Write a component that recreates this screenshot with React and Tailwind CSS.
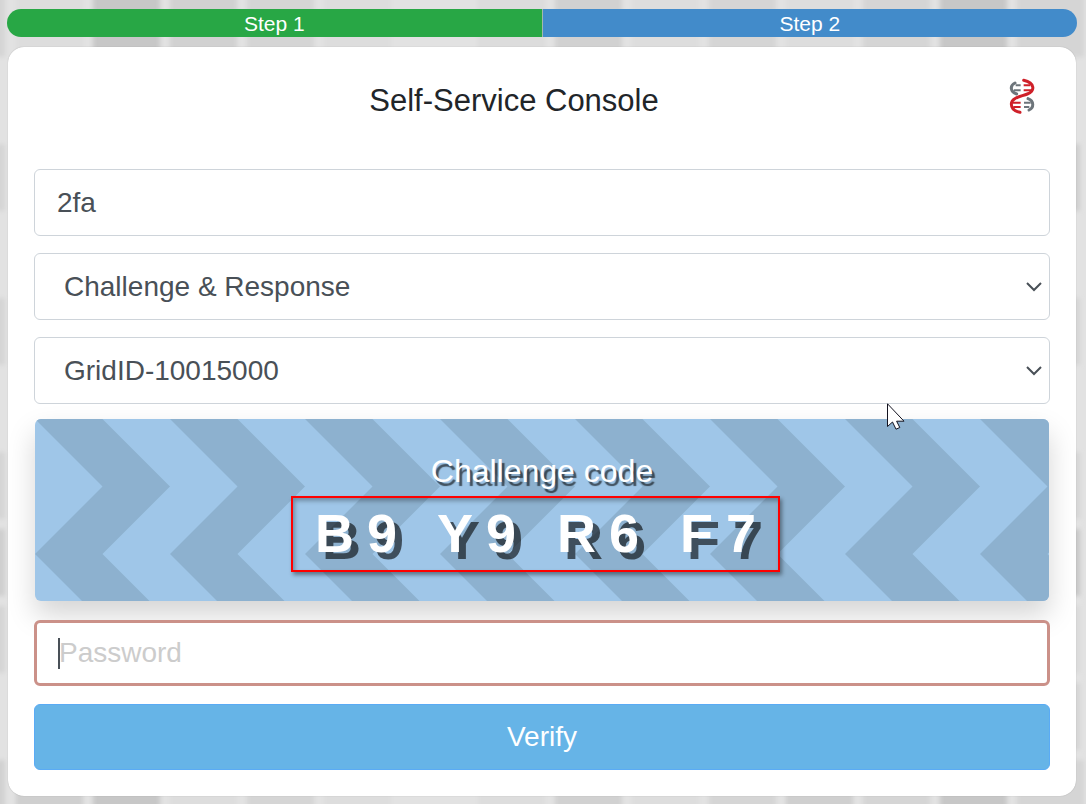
import React, { useState } from 'react';

const TILE = 67;
const PITCH = 77;

// shade per column, rows are listed as [row, shades]
const tileRows = [
  [0, ['#dddddd', '#c7c7c7', '#d1d1d1', '#d5d5d5', '#dddddd', '#e2e2e2', '#dcdcdc', '#d1d1d1', '#dddddd', '#d5d5d5', '#dddddd', '#d5d5d5', '#c7c7c7', '#d5d5d5']],
  [10, ['#cfcfcf', '#c7c7c7', '#dddddd', '#d5d5d5', '#dddddd', '#e2e2e2', '#dddddd', '#d1d1d1', '#dddddd', '#d5d5d5', '#cfcfcf', '#d5d5d5', '#c7c7c7', '#d5d5d5']],
];

const edgeTiles = [
  [-62, 0, '#d5d5d5'],
  [-62, 2, '#d5d5d5'],
  [-62, 4, '#d5d5d5'],
  [-62, 6, '#d5d5d5'],
  [-62, 7, '#cfcfcf'],
  [-62, 8, '#d5d5d5'],
  [-62, 10, '#d1d1d1'],
  [1013, 2, '#cfcfcf'],
  [1013, 4, '#d5d5d5'],
  [1013, 6, '#d5d5d5'],
  [1013, 7, '#c7c7c7'],
  [1013, 8, '#dadada'],
  [1013, 9, '#d5d5d5'],
];

function TiledBackground() {
  return (
    <svg className="absolute inset-0 h-full w-full" aria-hidden="true">
      <defs>
        <filter id="soft" x="-20%" y="-20%" width="140%" height="140%">
          <feGaussianBlur stdDeviation="2" />
        </filter>
      </defs>
      <g filter="url(#soft)">
        {tileRows.map(([row, shades]) =>
          shades.map((shade, col) => (
            <rect key={`${row}-${col}`} x={16 + col * PITCH} y={row * PITCH - 10} width={TILE} height={TILE} fill={shade} />
          ))
        )}
        {edgeTiles.map(([x, row, shade]) => (
          <rect key={`${x}-${row}`} x={x} y={row * PITCH - 10} width={TILE} height={TILE} fill={shade} />
        ))}
      </g>
    </svg>
  );
}

function Logo() {
  return (
    <svg viewBox="54 54 84 108" className="h-9 w-7" fill="none" strokeLinecap="round" role="img" aria-label="Logo">
      <g stroke="#6d757b" strokeWidth="6">
        <path d="M77 76H92M72 91H92M102 128H122M102 141H118" strokeLinecap="butt" />
        <path d="M75 69C59 77 60 94 80 102" strokeWidth="9" />
        <path d="M114 116C133 123 132 143 117 150" strokeWidth="9" />
      </g>
      <g stroke="#cf2029" strokeWidth="6">
        <path d="M101 76H121M101 91H125M69 128H92M70 141H92" strokeLinecap="butt" />
        <path d="M101 61C135 69 136 92 112 102C92 110 64 113 64 132C64 147 76 154 90 157" strokeWidth="9" />
      </g>
    </svg>
  );
}

function Chevrons() {
  return (
    <svg className="absolute inset-0 h-full w-full" aria-hidden="true">
      <defs>
        <pattern id="chevrons" width="135" height="135" patternUnits="userSpaceOnUse">
          <path d="M0 0H67.5L135 67.5L67.5 135H0L67.5 67.5Z" fill="#8db1cf" />
        </pattern>
      </defs>
      <rect width="100%" height="100%" fill="url(#chevrons)" />
    </svg>
  );
}

function SelectField({ label, options }) {
  return (
    <div className="relative">
      <select
        aria-label={label}
        className="block h-[67px] w-full appearance-none rounded-md border border-[#ced4da] bg-white pr-12 pl-[29px] text-[28px] text-[#495057]"
      >
        {options.map((option) => (
          <option key={option}>{option}</option>
        ))}
      </select>
      <svg viewBox="0 0 16 10" className="pointer-events-none absolute top-[29px] right-2 h-[10px] w-4" fill="none" stroke="#495057" strokeWidth="2">
        <path d="M1 1L8 8L15 1" />
      </svg>
    </div>
  );
}

export default function App() {
  const [user, setUser] = useState('2fa');
  const [password, setPassword] = useState('');

  return (
    <div className="relative min-h-screen overflow-hidden bg-[#e2e2e2] pt-[9px] pr-[10px] pb-2 pl-2 font-['Liberation_Sans',Arial,sans-serif]">
      <TiledBackground />

      <ol className="relative -mx-px flex h-7 overflow-hidden rounded-full text-center text-[21px] leading-[30px] text-white">
        <li className="flex-1 border-r border-[#a3b8ae] bg-[#28a745]">Step 1</li>
        <li className="flex-1 bg-[#428bca]">Step 2</li>
      </ol>

      <main className="relative mt-[10px] rounded-2xl bg-white px-[26px] pt-7 pb-[26px] shadow-[0_0_1px_rgba(0,0,0,0.3)]">
        <header className="flex h-[94px] items-start">
          <h1 className="flex-1 pt-1 text-center text-[31px] leading-[43px] text-[#212529]">Self-Service Console</h1>
          <a href="#" className="mt-[3px] mr-[14px] ml-[14px] block">
            <Logo />
          </a>
        </header>

        <form onSubmit={(e) => e.preventDefault()}>
          <div className="flex flex-col gap-[17px]">
            <input
              type="text"
              aria-label="Username"
              value={user}
              onChange={(e) => setUser(e.target.value)}
              className="block h-[67px] w-full rounded-md border border-[#ced4da] bg-white px-[22px] text-[28px] text-[#495057]"
            />
            <SelectField label="Method" options={['Challenge & Response']} />
            <SelectField label="Token" options={['GridID-10015000']} />
          </div>

          <section className="relative mx-px mt-[15px] h-[182px] rounded-md bg-[#9fc6e8] pt-8 text-center text-white shadow-[0_14px_28px_rgba(0,0,0,0.17)]">
            <div className="absolute inset-0 overflow-hidden rounded-md">
              <Chevrons />
            </div>
            <h2 className="relative text-[32px] leading-10 [text-shadow:3px_4px_1px_rgba(0,0,0,0.6)]">Challenge code</h2>
            <div className="relative mt-[5px] inline-block">
              <p className="pb-[2px] text-[54px] leading-[74px] font-bold tracking-[13px] whitespace-nowrap [text-shadow:7px_7px_0_rgba(0,0,0,0.6)]">
                B9 Y9 R6 F7
              </p>
              <span className="absolute inset-y-0 -right-[11px] -left-6 border-2 border-[#ff0000] shadow-[2px_3px_4px_rgba(0,0,0,0.4),inset_2px_3px_4px_rgba(0,0,0,0.3)]" />
            </div>
          </section>

          <div className="relative mt-[19px]">
            <input
              type="password"
              aria-label="Password"
              placeholder="Password"
              value={password}
              onChange={(e) => setPassword(e.target.value)}
              className="block h-[66px] w-full rounded-md border-3 border-[#cb9189] bg-white px-[22px] text-[28px] text-[#495057] caret-transparent outline-none placeholder:text-[#cccccc]"
            />
            <span className="absolute top-[18px] left-6 h-[31px] w-[2px] bg-[#495057]" />
          </div>

          <button
            type="submit"
            className="mt-[18px] block h-[66px] w-full rounded-md border border-[#5aabf5] bg-[#66b4e7] text-[28px] text-white"
          >
            Verify
          </button>
        </form>
      </main>

      <svg viewBox="0 0 18 27" className="pointer-events-none absolute top-[403px] left-[887px] h-[27px] w-[18px]" aria-hidden="true">
        <path d="M0.5 0.8V23.5L5.5 19L9 26.2L12.8 24.5L9.6 18.2H17Z" fill="#fff" stroke="#12121f" strokeWidth="1" />
      </svg>
    </div>
  );
}
